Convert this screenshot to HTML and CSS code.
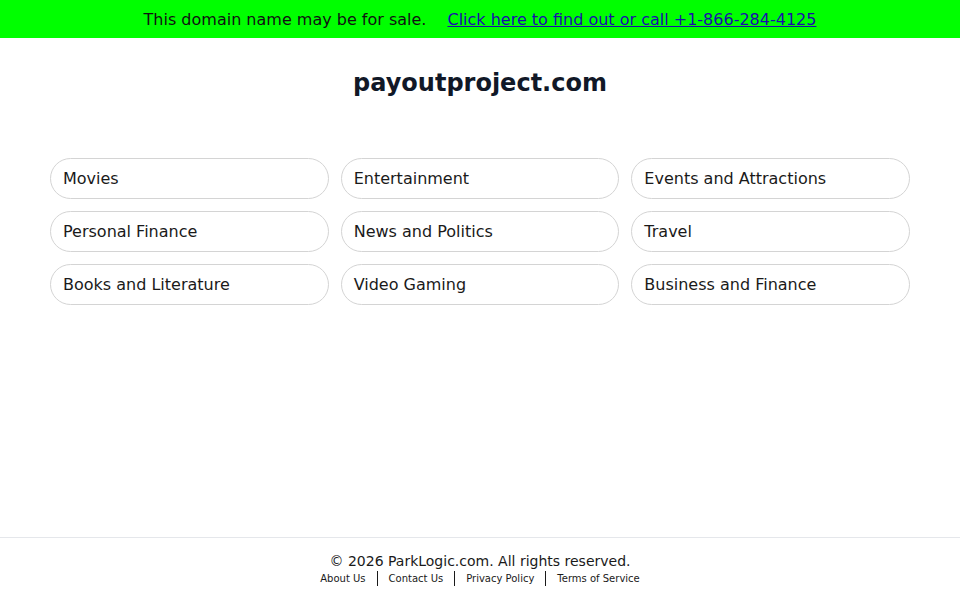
FILE: index.html
```html
<!doctype html>
<html>

<head>
	<meta charset=utf-8>
	<title>payoutproject.com</title>
	<meta name=viewport content="width=device-width, initial-scale=1">
	<link rel="stylesheet" href="styles.css">
</head>

<body>
	<div class="sale-bar">
		<span>This domain name may be for sale.</span>
		<a href="#">Click here to find out or call +1-866-284-4125</a>
	</div>

	<main class="content">
		<h1 class="domain">payoutproject.com</h1>

		<div class="topics">
			<a class="topic" href="#">Movies</a>
			<a class="topic" href="#">Entertainment</a>
			<a class="topic" href="#">Events and Attractions</a>
			<a class="topic" href="#">Personal Finance</a>
			<a class="topic" href="#">News and Politics</a>
			<a class="topic" href="#">Travel</a>
			<a class="topic" href="#">Books and Literature</a>
			<a class="topic" href="#">Video Gaming</a>
			<a class="topic" href="#">Business and Finance</a>
		</div>
	</main>

	<footer class="footer">
		<div class="copy">&copy; 2026 ParkLogic.com. All rights reserved.</div>
		<nav class="footer-links">
			<a href="#">About Us</a>
			<a href="#">Contact Us</a>
			<a href="#">Privacy Policy</a>
			<a href="#">Terms of Service</a>
		</nav>
	</footer>
</body>
</html>
```

FILE: styles.css
```css
html, body{
	height: 100%;
	margin: 0; padding: 0;
}

body{
	display: flex;
	flex-direction: column;
	font-family: "DejaVu Sans", sans-serif;
	color: #1a1a1a;
	background: #fff;
}

*, *:after, *:before{
	box-sizing: border-box;
}

.sale-bar{
	height: 38px;
	background: #00ff00;
	color: #111;
	font-size: 16px;
	display: flex;
	align-items: center;
	justify-content: center;
	gap: 21px;
}

.sale-bar a{
	color: #1a0dab;
}

.content{
	flex: 1;
	width: 860px;
	margin: 0 auto;
}

.domain{
	margin: 30px 0 0;
	font-size: 24px;
	line-height: 30px;
	text-align: center;
	color: #111827;
}

.topics{
	margin-top: 60px;
	display: grid;
	grid-template-columns: repeat(3, 1fr);
	column-gap: 12px;
	row-gap: 12px;
}

.topic{
	height: 41px;
	padding: 0 12px;
	display: flex;
	align-items: center;
	border: 1px solid #d4d4d4;
	border-radius: 21px;
	color: #1a1a1a;
	font-size: 16px;
	text-decoration: none;
}

.footer{
	height: 63px;
	border-top: 1px solid #e5e7eb;
	text-align: center;
	padding-top: 14px;
}

.copy{
	font-size: 14px;
	line-height: 18px;
	color: #1a1a1a;
}

.footer-links{
	display: flex;
	justify-content: center;
	margin-top: 1px;
}

.footer-links a{
	font-size: 10px;
	line-height: 15px;
	color: #1a1a1a;
	text-decoration: none;
	padding: 0 11px;
	border-left: 1px solid #1a1a1a;
}

.footer-links a:first-child{
	border-left: none;
}
```
